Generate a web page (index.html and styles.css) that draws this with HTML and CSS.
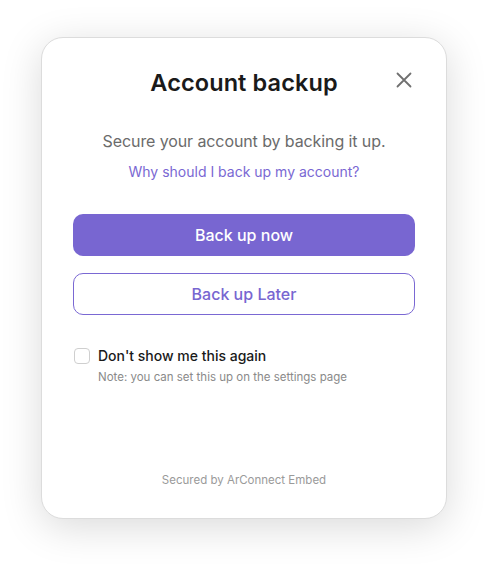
FILE: index.html
```html
<!DOCTYPE html>
<html>
<head>
<meta charset="utf-8">
<link rel="stylesheet" href="styles.css">
</head>
<body>
<div class="card">
  <div class="header">
    <h1 class="title">Account backup</h1>
    <button class="close" aria-label="Close">
      <svg width="16" height="16" viewBox="0 0 16 16"><path d="M1.5 1.5 L14.5 14.5 M14.5 1.5 L1.5 14.5" stroke="#707070" stroke-width="1.8" stroke-linecap="round" fill="none"/></svg>
    </button>
  </div>
  <p class="subtitle">Secure your account by backing it up.</p>
  <a class="why">Why should I back up my account?</a>
  <div class="actions">
    <button class="btn primary">Back up now</button>
    <button class="btn secondary">Back up Later</button>
  </div>
  <div class="check">
    <span class="box"></span>
    <div class="check-text">
      <div class="label">Don't show me this again</div>
      <div class="note">Note: you can set this up on the settings page</div>
    </div>
  </div>
  <div class="footer">Secured by ArConnect Embed</div>
</div>
</body>
</html>
```
FILE: styles.css
```css
* { box-sizing: border-box; }
html, body { margin: 0; background: #fff; }
body {
  padding: 37px 0 45px 41px;
  min-height: 564px;
  font-family: Inter, "Noto Sans", sans-serif;
}
.card {
  width: 406px;
  height: 482px;
  border: 1px solid #dcdcdc;
  border-radius: 22px;
  background: #fff;
  box-shadow: 0 8px 40px rgba(0,0,0,0.15);
  padding: 0 31px 0 31px;
  display: flex;
  flex-direction: column;
  align-items: center;
}
.header {
  position: relative;
  width: 100%;
  display: flex;
  justify-content: center;
  padding-top: 30px;
}
.title {
  margin: 0;
  font-size: 23.5px;
  font-weight: 600;
  color: #1a1a1a;
  line-height: 30px;
  letter-spacing: 0.1px;
}
.close {
  position: absolute;
  right: 3px;
  top: 34px;
  background: none;
  border: 0;
  padding: 0;
  width: 16px;
  height: 16px;
  display: flex;
}
.subtitle {
  margin: 33px 0 0;
  font-size: 16px;
  line-height: 20px;
  color: #6b6b6b;
  letter-spacing: -0.1px;
}
.why {
  margin-top: 12px;
  font-size: 14px;
  line-height: 18px;
  color: #7a68d3;
}
.actions {
  width: 100%;
  margin-top: 33px;
  display: flex;
  flex-direction: column;
  gap: 17px;
}
.btn {
  width: 100%;
  height: 42px;
  border-radius: 10px;
  font-family: inherit;
  font-size: 16px;
  font-weight: 500;
}
.primary {
  background: #7866d1;
  border: 0;
  color: #fff;
}
.secondary {
  background: #fff;
  border: 1.5px solid #7a68d3;
  color: #7866d1;
}
.check {
  width: 100%;
  margin-top: 32px;
  display: flex;
  gap: 8px;
  align-items: flex-start;
}
.box {
  width: 16px;
  height: 16px;
  border: 1px solid #cfcfcf;
  border-radius: 4px;
  margin: 1px 0 0 1px;
  flex-shrink: 0;
}
.label {
  font-size: 14px;
  line-height: 18px;
  color: #1a1a1a;
  font-weight: 500;
}
.note {
  margin-top: 5px;
  font-size: 11.5px;
  line-height: 15px;
  color: #8a8a8a;
}
.footer {
  margin-top: auto;
  margin-bottom: 31px;
  font-size: 11.5px;
  color: #9a9a9a;
}
```
